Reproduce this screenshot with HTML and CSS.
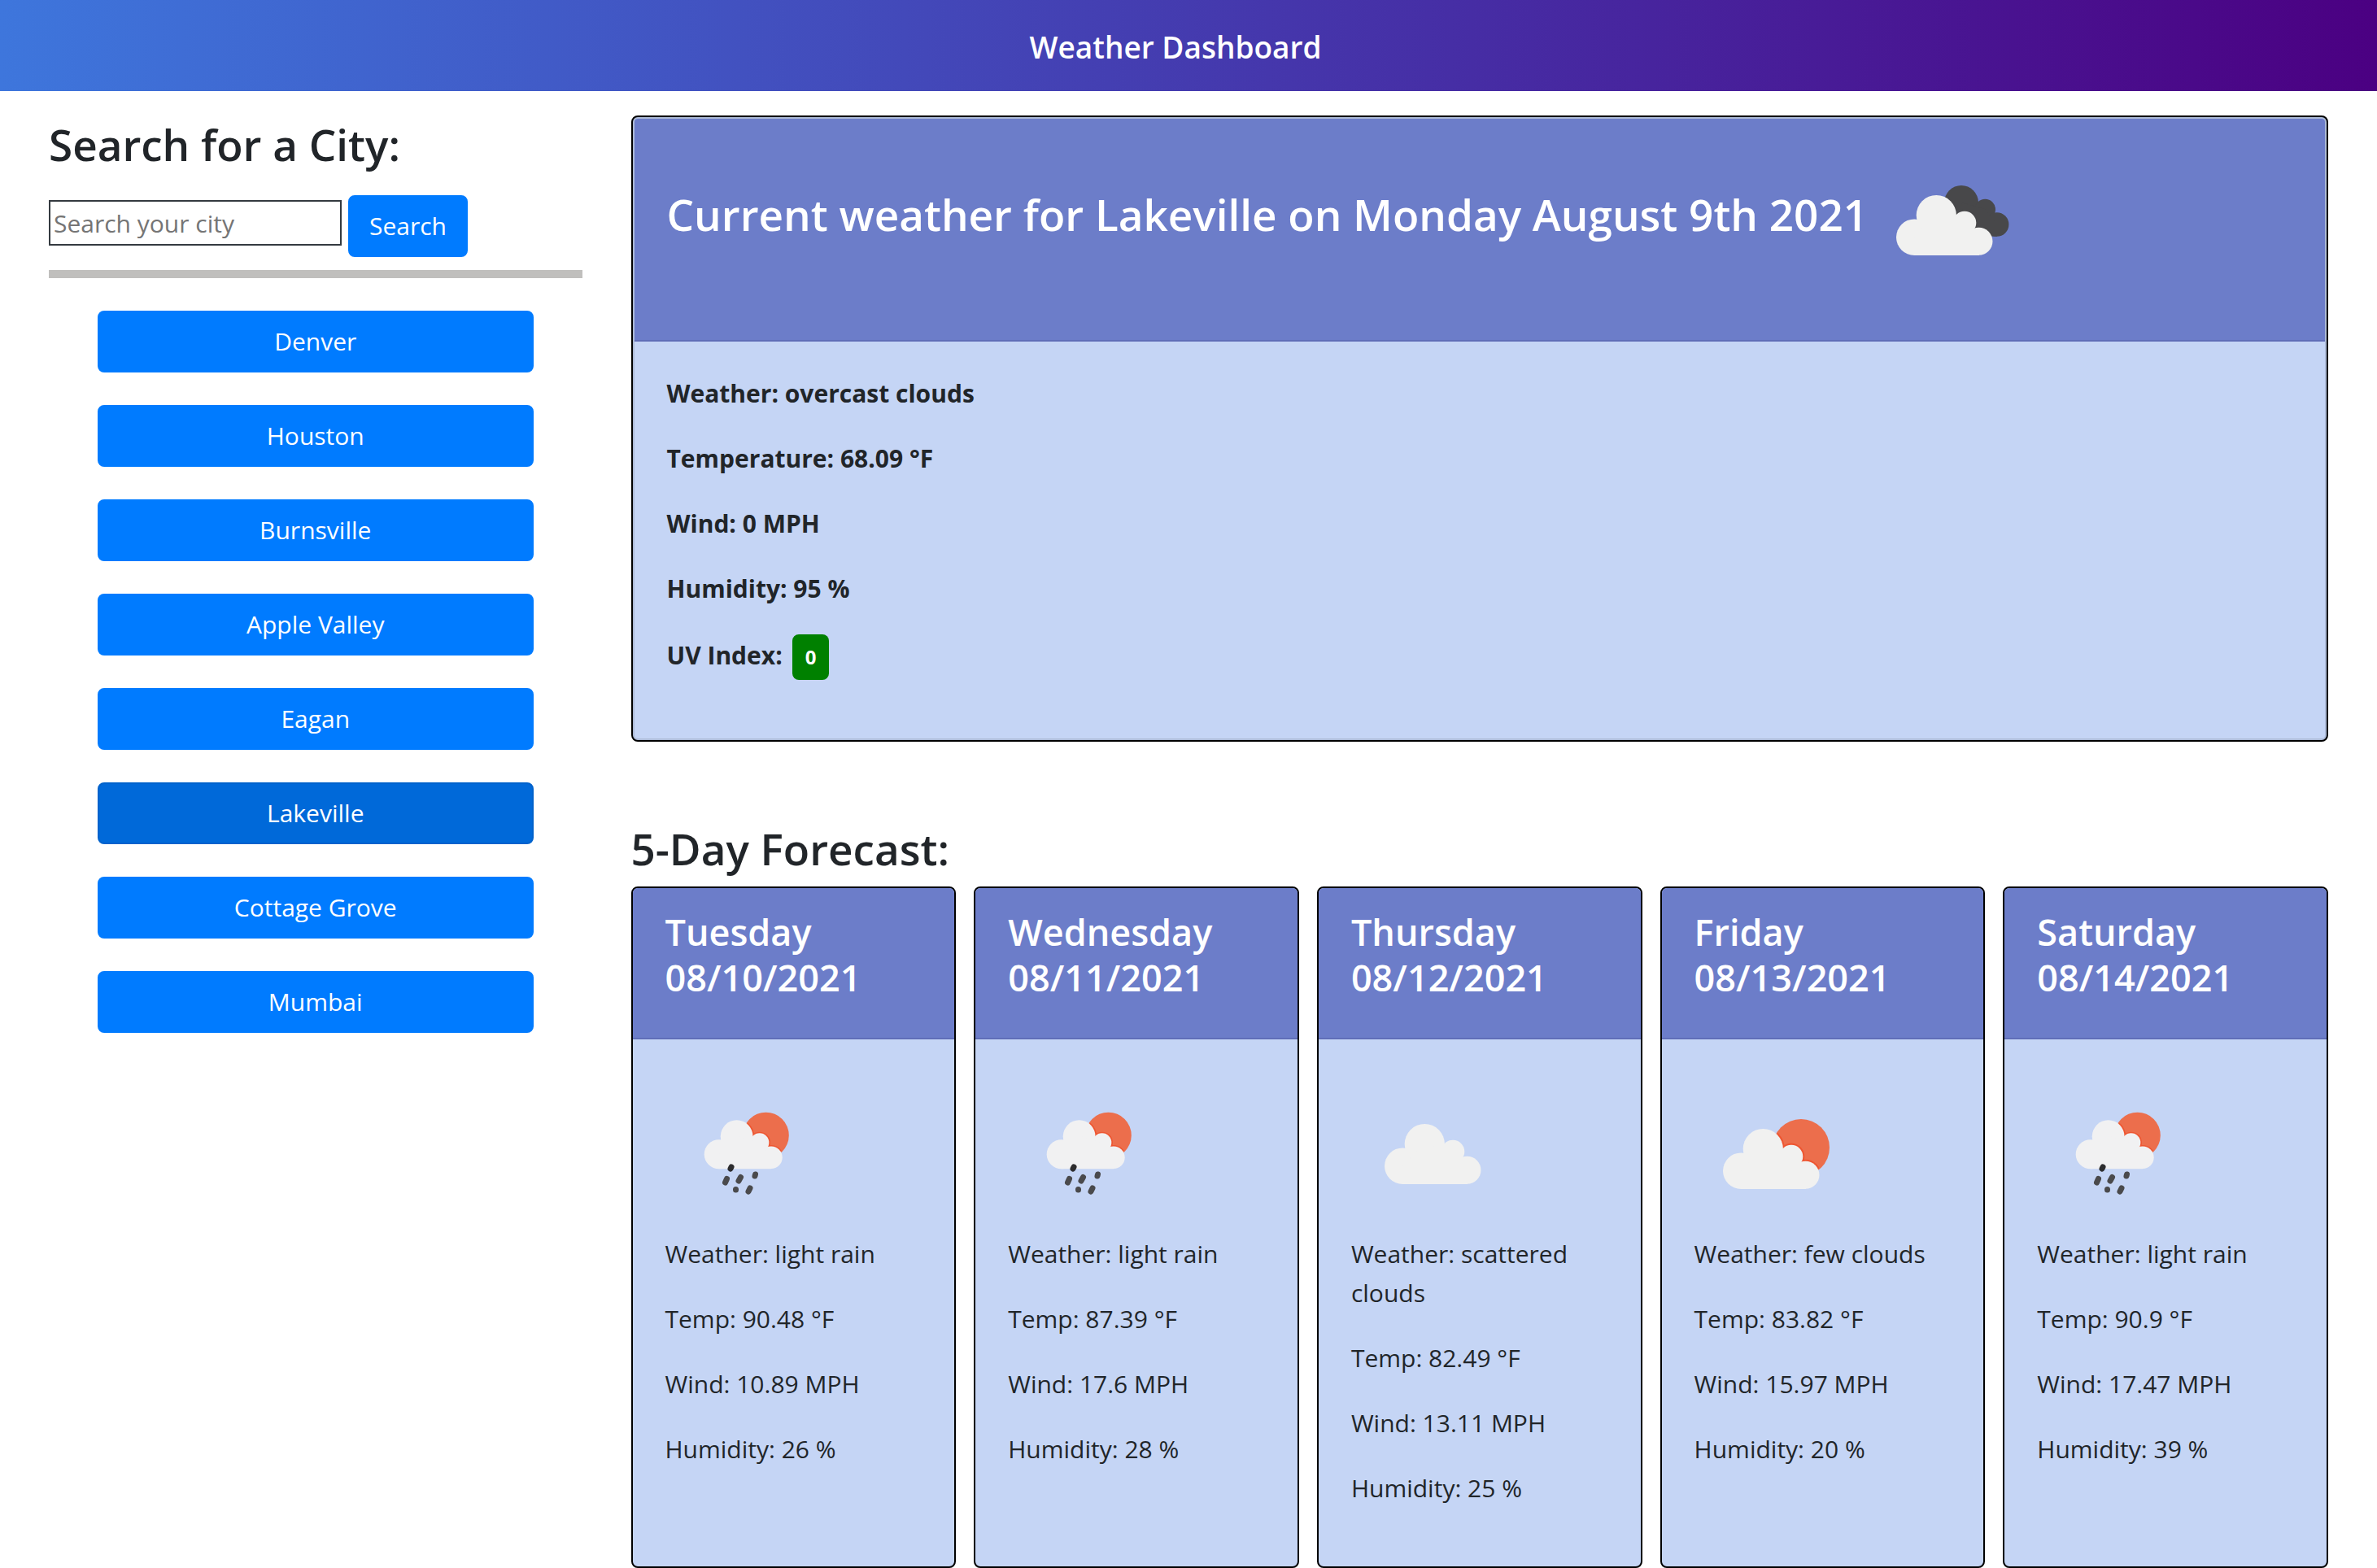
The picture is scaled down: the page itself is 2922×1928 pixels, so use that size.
FILE: index.html
```html
<!DOCTYPE html>
<html lang="en">
<head>
<meta charset="utf-8">
<meta name="viewport" content="width=device-width, initial-scale=1">
<title>Weather Dashboard</title>
<link rel="stylesheet" href="styles.css">
</head>
<body>
<svg class="sprite" width="0" height="0" aria-hidden="true">
  <defs>
    <g id="cloud">
      <circle cx="63.300" cy="115.700" r="22.300"/>
      <circle cx="90.300" cy="88.600" r="24.600"/>
      <circle cx="125" cy="98" r="14.300"/>
      <circle cx="142.500" cy="120.800" r="17"/>
      <path d="M63 138H143V120L125 98L90 88L63 116Z"/>
    </g>
    <clipPath id="sun-big"><circle cx="131" cy="93" r="34"/></clipPath>
    <clipPath id="sun-small"><circle cx="123.500" cy="78" r="27"/></clipPath>
    <symbol id="few" viewBox="0 0 200 200">
      <circle cx="131" cy="93" r="35" fill="#ec6e4c"/>
      <g clip-path="url(#sun-big)"><use href="#cloud" x="-6" y="6" fill="none" stroke="#ee5530" stroke-width="4"/></g>
      <use href="#cloud" x="-6" y="6" fill="#f1f1f0"/>
    </symbol>
    <symbol id="scattered" viewBox="0 0 200 200">
      <use href="#cloud" fill="#f1f1f0"/>
    </symbol>
    <symbol id="overcast" viewBox="0 0 200 200">
      <g fill="#48484a">
        <circle cx="111" cy="79" r="21"/>
        <circle cx="140.300" cy="87.500" r="12.700"/>
        <circle cx="154.700" cy="106" r="14.700"/>
        <path d="M111 79L140 87L155 106V120.700H120Z"/>
      </g>
      <use href="#cloud" x="-10" y="6" fill="#f1f1f0"/>
    </symbol>
    <symbol id="rain" viewBox="0 0 200 200">
      <circle cx="123.500" cy="78" r="28.300" fill="#ec6e4c"/>
      <g clip-path="url(#sun-small)"><use href="#cloud" transform="translate(14.500 7.500) scale(.81)" fill="none" stroke="#ee5530" stroke-width="4"/></g>
      <use href="#cloud" transform="translate(14.500 7.500) scale(.81)" fill="#f1f1f2"/>
      <g fill="none" stroke="#4a4a4c" stroke-width="7" stroke-linecap="round">
        <path d="M81 117l-1 2" stroke="#2c2c2e"/>
        <path d="M75.500 131.500l-2 4.500M92.500 129.500l-2.500 4.500M110.500 126l-.500 2M86.500 144.500v.500M104 143l-2 4"/>
      </g>
    </symbol>
  </defs>
</svg>

<header class="navbar"><h1 class="brand">Weather Dashboard</h1></header>

<div class="layout">
  <aside class="sidebar">
    <h2 class="heading"><label for="city">Search for a City:</label></h2>
    <form class="search">
      <input class="search-input" id="city" type="text" placeholder="Search your city">
      <button class="btn" type="button">Search</button>
    </form>
    <hr class="rule">
    <div class="history">
      <button class="btn" type="button">Denver</button>
      <button class="btn" type="button">Houston</button>
      <button class="btn" type="button">Burnsville</button>
      <button class="btn" type="button">Apple Valley</button>
      <button class="btn" type="button">Eagan</button>
      <button class="btn btn-active" type="button">Lakeville</button>
      <button class="btn" type="button">Cottage Grove</button>
      <button class="btn" type="button">Mumbai</button>
    </div>
  </aside>

  <main class="content">
    <section class="current">
      <div class="current-inner">
        <div class="current-header">
          <h2 class="current-title">Current weather for Lakeville on Monday August 9th 2021</h2>
          <svg class="icon" role="img" aria-label="overcast clouds"><use href="#overcast"/></svg>
        </div>
        <div class="current-body">
          <p>Weather: overcast clouds</p>
          <p>Temperature: 68.09 °F</p>
          <p>Wind: 0 MPH</p>
          <p>Humidity: 95 %</p>
          <p class="uv">UV Index: <span class="badge">0</span></p>
        </div>
      </div>
    </section>

    <h2 class="heading">5-Day Forecast:</h2>
    <section class="forecast">
      <article class="day">
        <h3 class="day-header">Tuesday<br>08/10/2021</h3>
        <div class="day-body">
          <svg class="icon" role="img" aria-label="light rain"><use href="#rain"/></svg>
          <p>Weather: light rain</p><p>Temp: 90.48 °F</p><p>Wind: 10.89 MPH</p><p>Humidity: 26 %</p>
        </div>
      </article>
      <article class="day">
        <h3 class="day-header">Wednesday<br>08/11/2021</h3>
        <div class="day-body">
          <svg class="icon" role="img" aria-label="light rain"><use href="#rain"/></svg>
          <p>Weather: light rain</p><p>Temp: 87.39 °F</p><p>Wind: 17.6 MPH</p><p>Humidity: 28 %</p>
        </div>
      </article>
      <article class="day">
        <h3 class="day-header">Thursday<br>08/12/2021</h3>
        <div class="day-body">
          <svg class="icon" role="img" aria-label="scattered clouds"><use href="#scattered"/></svg>
          <p>Weather: scattered clouds</p><p>Temp: 82.49 °F</p><p>Wind: 13.11 MPH</p><p>Humidity: 25 %</p>
        </div>
      </article>
      <article class="day">
        <h3 class="day-header">Friday<br>08/13/2021</h3>
        <div class="day-body">
          <svg class="icon" role="img" aria-label="few clouds"><use href="#few"/></svg>
          <p>Weather: few clouds</p><p>Temp: 83.82 °F</p><p>Wind: 15.97 MPH</p><p>Humidity: 20 %</p>
        </div>
      </article>
      <article class="day">
        <h3 class="day-header">Saturday<br>08/14/2021</h3>
        <div class="day-body">
          <svg class="icon" role="img" aria-label="light rain"><use href="#rain"/></svg>
          <p>Weather: light rain</p><p>Temp: 90.9 °F</p><p>Wind: 17.47 MPH</p><p>Humidity: 39 %</p>
        </div>
      </article>
    </section>
  </main>
</div>
</body>
</html>
```

FILE: styles.css
```css
* { box-sizing: border-box; }

body {
  margin: 0;
  background: #fff;
  color: #212529;
  font-family: "Segoe UI", "Open Sans", "Noto Sans", sans-serif;
  font-size: 30px;
  line-height: 48px;
}

h1, h2, h3, p { margin: 0; }

.sprite { position: absolute; }

.navbar {
  display: flex;
  justify-content: center;
  padding: 28px 64px 24px 32px;
  background: linear-gradient(to right, #3e76dc, #4b0082);
}

.brand {
  color: #fff;
  font-size: 37px;
  font-weight: 600;
  line-height: 60px;
}

.layout {
  display: flex;
  padding: 0 30px;
}

.sidebar {
  width: 25%;
  padding: 32px 30px 0;
}

.content {
  flex: 1;
  min-width: 0;
  padding: 30px 30px 0;
}

.heading {
  font-size: 53px;
  font-weight: 600;
  line-height: 68px;
}

.search {
  display: flex;
  align-items: center;
  gap: 8px;
  margin-top: 28px;
}

.search-input {
  width: 360px;
  height: 56px;
  margin-bottom: 8px;
  padding: 2px 4px;
  border: 2px solid #343a40;
  background: #fff;
  color: #212529;
  font: inherit;
}

.search-input::placeholder { color: #757575; }

.btn {
  padding: 12px 24px;
  border: 2px solid #007bff;
  border-radius: 8px;
  background: #007bff;
  color: #fff;
  font: inherit;
}

.btn-active {
  border-color: #0062cc;
  background: #0069d9;
}

.rule {
  height: 10px;
  margin: 16px 0 40px;
  border: 0;
  background: #c0bfbd;
}

.history {
  display: grid;
  gap: 40px;
  padding: 0 60px;
}

.current {
  margin-bottom: 98px;
  border: 2px solid #000;
  border-radius: 8px;
  background: #c5d5f5;
}

.current-inner {
  border: 2px solid rgba(0, 0, 0, .125);
  border-radius: 6px;
}

.current-header {
  display: flex;
  align-items: flex-start;
  gap: 4px;
  padding: 24px 40px 48px;
  border-bottom: 2px solid #606eb8;
  border-radius: 4px 4px 0 0;
  background: #6c7dc9;
}

.current-title {
  padding-top: 60px;
  color: #fff;
  font-size: 53px;
  font-weight: 600;
  line-height: 68px;
}

.icon {
  display: block;
  flex: none;
  width: 200px;
  height: 200px;
}

.current-body {
  display: grid;
  gap: 32px;
  padding: 40px 40px 72px;
  font-weight: 700;
}

.uv {
  display: flex;
  align-items: baseline;
  gap: 12px;
}

.badge {
  padding: 4px 16px;
  border-radius: 8px;
  background: #008000;
  color: #fff;
  font-size: 24px;
}

.forecast {
  display: grid;
  grid-template-columns: repeat(5, 1fr);
  gap: 22px;
  margin-top: 12px;
}

.day {
  border: 2px solid #000;
  border-radius: 8px;
  background: #c5d5f5;
}

.day-header {
  padding: 26px 40px 46px;
  border-bottom: 2px solid #606eb8;
  border-radius: 6px 6px 0 0;
  background: #6c7dc9;
  color: #fff;
  font-size: 45px;
  font-weight: 600;
  line-height: 56px;
}

.day-body {
  padding: 40px 40px 72px;
}

.day-body p { margin-bottom: 32px; }

.day-body p:last-child { margin-bottom: 0; }
```
